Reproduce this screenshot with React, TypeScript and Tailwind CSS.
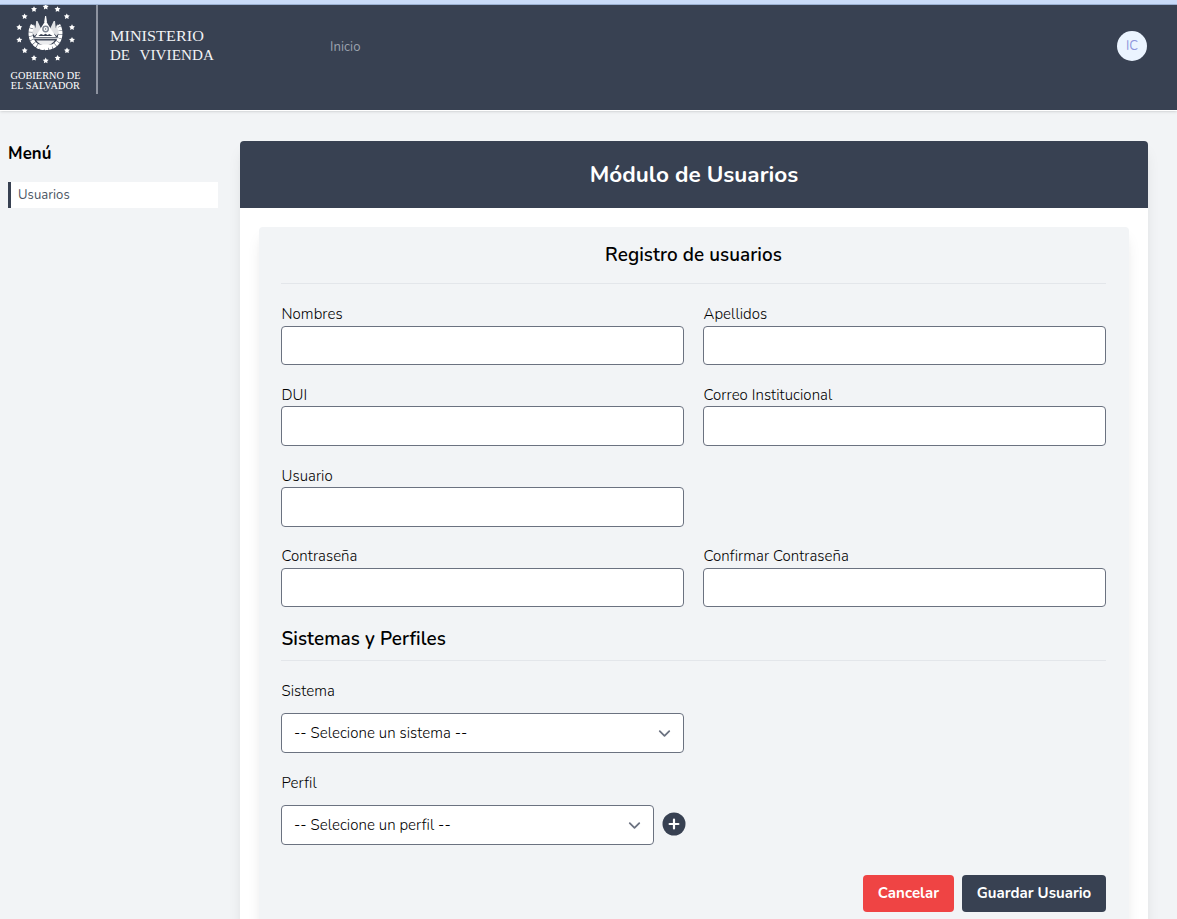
import type { ReactNode } from "react";

const STARS = [
  [45.7, 6.9], [57.5, 9.3], [66.8, 16.5], [72, 27.4], [72, 40], [67, 50.6], [57.6, 58.1],
  [45.7, 60.7], [34, 58.1], [24.7, 50.6], [19.3, 40], [19.3, 27.4], [24.6, 16.5], [34, 9.3],
];

function starPoints(cx: number, cy: number) {
  return Array.from({ length: 10 }, (_, i) => {
    const r = i % 2 === 0 ? 3.1 : 1.6;
    const a = -Math.PI / 2 + (i * Math.PI) / 5;
    return `${(cx + r * Math.cos(a)).toFixed(2)},${(cy + r * Math.sin(a)).toFixed(2)}`;
  }).join(" ");
}

function Emblem() {
  return (
    <svg viewBox="10 5 70 61" className="block h-[61px] w-[70px] shrink-0" fill="#fff">
      {STARS.map(([x, y]) => (
        <polygon key={`${x}-${y}`} points={starPoints(x, y)} />
      ))}
      <path
        d="M32.800 25C29.800 30 29.800 37.500 33.500 42.500c2.800 3.800 7 5.500 12 5.500s9.200-1.700 12-5.500C61.200 37.500 61.200 30 58.200 25"
        fill="none"
        stroke="#fff"
        strokeWidth="4.200"
        strokeDasharray="3.400 .5"
      />
      <path d="M36 40c2 3.500 5.500 5.200 9.500 5.200S53 43.500 55 40z" opacity=".9" />
      <path d="M38.500 44.500l1.500 5 3-2 2.500 3 2.500-3 3 2 1.500-5z" />
      <path d="M45.100 16h1l.9 6h-2.800zM45.600 20.500l10.400 16.500H35.200z" />
      <path d="M33.500 37.600h24.200v1.600H33.500z" opacity=".7" />
      <circle cx="45.600" cy="29" r="3.400" fill="#7c8492" />
      <circle cx="45.600" cy="29" r="2" />
      <circle cx="45.600" cy="29" r=".8" fill="#5d6676" />
      <path d="M38.300 36l2.700-2 2.500 1 2-1.300 2.200 1.200 1.600-1 3.300 2.100z" fill="#384152" />
      <path d="M36.200 21l1.300 0 3.500 7.500-3 6-3-2zM33.800 24l3.500 9-2.500 3-2.500-3zM55 21l-1.300 0-3.500 7.500 3 6 3-2zM57.400 24l-3.500 9 2.500 3 2.500-3z" opacity=".85" />
      <path d="M35 40h21.500" stroke="#384152" strokeWidth="1" />
    </svg>
  );
}

function Header() {
  return (
    <header className="flex h-[106px] items-start border-b border-white bg-[#384152] shadow-sm">
      <div className="flex w-[96px] flex-col pl-[10px]">
        <Emblem />
        <svg viewBox="0 0 74 28" className="block h-[28px] w-[74px] shrink-0 font-['Liberation_Serif',serif]" fill="#fff">
          <text x="0.500" y="12.700" fontSize="11" textLength="70" lengthAdjust="spacingAndGlyphs">GOBIERNO DE</text>
          <text x="0.800" y="22.700" fontSize="11" textLength="69" lengthAdjust="spacingAndGlyphs">EL SALVADOR</text>
        </svg>
      </div>
      <div className="h-[89px] w-[2px] bg-[#8d93a0]" />
      <svg viewBox="0 0 110 45" className="mt-[21px] ml-[11px] block h-[45px] w-[110px] font-['Liberation_Serif',serif]" fill="#f2f3f5">
        <text x="1" y="15" fontSize="15" textLength="94" lengthAdjust="spacingAndGlyphs">MINISTERIO</text>
        <text x="1" y="34" fontSize="15" textLength="20" lengthAdjust="spacingAndGlyphs">DE</text>
        <text x="30.500" y="34" fontSize="15" textLength="74.500" lengthAdjust="spacingAndGlyphs">VIVIENDA</text>
      </svg>
      <a className="mt-[32px] ml-[111px] text-[13.070px] leading-5 font-normal text-[#9ca3af]">Inicio</a>
      <div className="mt-[26px] mr-[30px] ml-auto flex size-[30px] items-center justify-center rounded-full bg-[#ebf4ff] pt-[2px] text-[13px] font-normal text-[#8f96dc]">
        IC
      </div>
    </header>
  );
}

function Sidebar() {
  return (
    <aside className="w-[210px] pt-[1px]">
      <h2 className="text-[16.800px] leading-[24px] font-bold">Menú</h2>
      <a className="mt-[16px] flex h-[26px] items-center border-l-[3px] border-[#384152] bg-white pt-[2px] pl-[7px] text-[13.070px] font-[370] text-[#4b5563]">
        Usuarios
      </a>
    </aside>
  );
}

function Field({ label }: { label: string }) {
  return (
    <label className="block">
      <span className="block pl-[0.500px] leading-[22.400px]">{label}</span>
      <input className="block h-[39.500px] w-full rounded-[4px] border border-[#6b7280] bg-white px-3 outline-none" />
    </label>
  );
}

function SelectBox({ children, width }: { children: ReactNode; width: string }) {
  return (
    <div className={`flex h-[40px] items-center justify-between rounded-[4px] border border-[#6b7280] bg-white pr-[9px] pl-[12px] ${width}`}>
      <span>{children}</span>
      <svg viewBox="0 0 20 20" className="size-[19px]" fill="none" stroke="#6b7280" strokeWidth="1.500" strokeLinecap="round" strokeLinejoin="round">
        <path d="M6 8l4 4 4-4" transform="translate(-2.500 -2.500) scale(1.250)" />
      </svg>
    </div>
  );
}

export default function App() {
  return (
    <div className="h-[919px] overflow-hidden bg-[#f2f4f6] font-['Nunito',sans-serif] text-[15px] font-[360] tracking-[0.060px] text-black">
      <div className="h-[5px] border-b border-[#9db3d6] bg-[#c9dbf8]" />
      <Header />
      <div className="flex gap-[22px] pt-[30px] pl-[8px]">
        <Sidebar />
        <main className="h-[840px] w-[908px] rounded-[4px] bg-white shadow-lg">
          <h1 className="flex h-[67px] items-center justify-center rounded-t-[4px] bg-[#384152] text-[22.500px] font-bold tracking-normal text-white">
            Módulo de Usuarios
          </h1>
          <section className="mx-[19px] mt-[19px] h-[740px] rounded-[4px] bg-[#f2f4f6] pt-[14px] pr-[23px] pl-[22px] shadow-lg">
            <h2 className="text-center text-[18.900px] leading-[29px] font-[640]">Registro de usuarios</h2>
            <hr className="mt-[13px] border-[#e3e6ea]" />
            <div className="mt-[19.400px] grid grid-cols-2 gap-x-[19px] gap-y-[18.770px]">
              <Field label="Nombres" />
              <Field label="Apellidos" />
              <Field label="DUI" />
              <Field label="Correo Institucional" />
              <div className="col-span-2 grid grid-cols-2 gap-x-[19px]">
                <Field label="Usuario" />
              </div>
              <Field label="Contraseña" />
              <Field label="Confirmar Contraseña" />
            </div>
            <h2 className="mt-[17.700px] pl-[0.500px] text-[18.900px] leading-[29px] font-[640]">Sistemas y Perfiles</h2>
            <hr className="mt-[6px] border-[#e3e6ea]" />
            <div className="mt-[19px] pl-[0.500px] leading-[22px]">Sistema</div>
            <div className="mt-[11px]">
              <SelectBox width="w-[403px]">-- Selecione un sistema --</SelectBox>
            </div>
            <div className="mt-[19px] pl-[0.500px] leading-[22px]">Perfil</div>
            <div className="mt-[11px] flex items-center gap-[8px]">
              <SelectBox width="w-[373px]">-- Selecione un perfil --</SelectBox>
              <svg viewBox="0 0 24 24" className="-mt-[2px] -ml-[0.500px] size-[24px]">
                <circle cx="12" cy="12" r="11.500" fill="#384152" />
                <path d="M12 7.600v8.800M7.600 12h8.800" stroke="#fff" strokeWidth="2.200" strokeLinecap="round" />
              </svg>
            </div>
            <div className="mt-[30px] flex justify-end gap-[8px] font-bold text-white">
              <button className="h-[37px] w-[91px] rounded-[4px] bg-[#ef4444]">Cancelar</button>
              <button className="h-[37px] w-[144px] rounded-[4px] bg-[#384152] tracking-normal">Guardar Usuario</button>
            </div>
          </section>
        </main>
      </div>
    </div>
  );
}
